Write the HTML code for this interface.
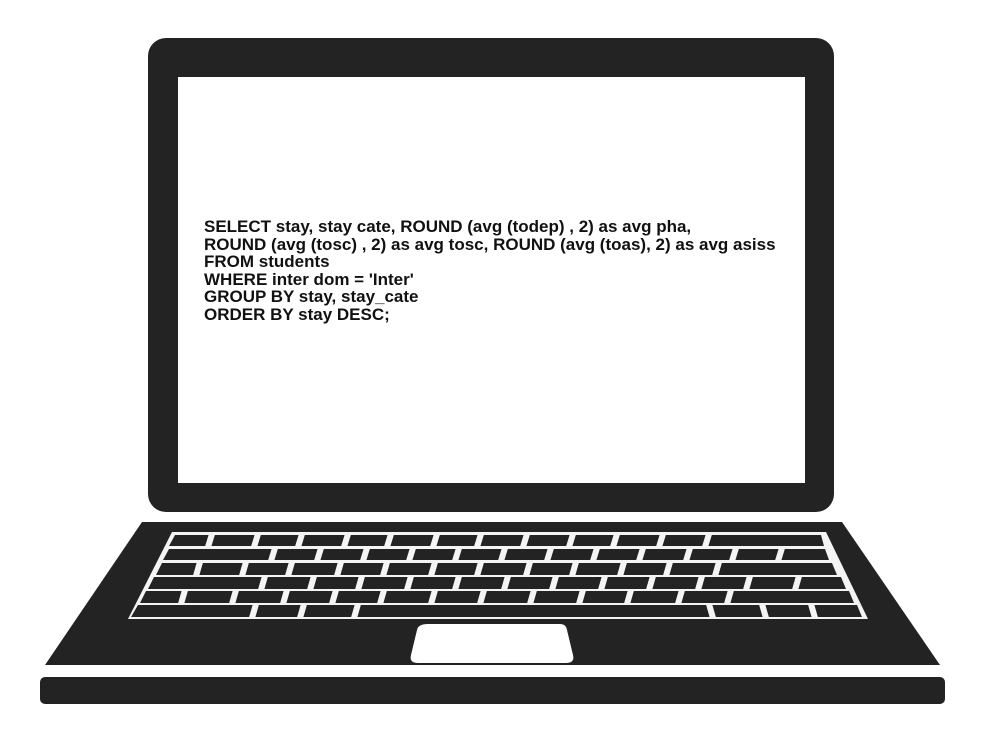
<!DOCTYPE html>
<html><head><meta charset="utf-8"><style>
html,body{margin:0;padding:0;background:#fff;width:1004px;height:752px;overflow:hidden}
svg{position:absolute;left:0;top:0}
.code{position:absolute;left:204px;top:218px;font:bold 17px/17.5px "Liberation Sans",Arial,sans-serif;color:#111;letter-spacing:0;white-space:pre}
</style></head><body>
<svg width="1004" height="752" viewBox="0 0 1004 752">
<rect x="148" y="38" width="686" height="474" rx="18" fill="#232323"/>
<rect x="178" y="77" width="627" height="406" fill="#fff"/>
<polygon points="142,522 842,522 940,665 45,665" fill="#232323"/>
<rect x="40" y="677" width="905" height="27" rx="5" fill="#232323"/>
<polygon points="172,532 826,532 868,619 128,619" fill="#f4f4f4"/>
<g fill="#232323">
<polygon points="175,535 821,535 824,546 169,546"/>
<polygon points="169,549 825,549 829,560 163,560"/>
<polygon points="162,563 832,563 837,575 156,575"/>
<polygon points="154,577 841,577 846,589 148,589"/>
<polygon points="146,591 849,591 854,603 140,603"/>
<polygon points="138,605 857,605 862,617 131,617"/>
</g>
<g stroke="#f4f4f4" stroke-width="6">
<path d="M212 534l-4 13M258 534l-4 13M302 534l-4 13M348 534l-4 13M391 534l-4 13M437 534l-4 13M481 534l-4 13M527 534l-4 13M573 534l-4 13M617 534l-4 13M663 534l-4 13M709 534l-4 13"/>
<path d="M275 548l-4 13M321 548l-4 13M367 548l-4 13M413 548l-4 13M459 548l-4 13M505 548l-4 13M551 548l-4 13M597 548l-4 13M643 548l-4 13M690 548l-4 13M736 548l-4 13M782 548l-4 13"/>
<path d="M200 562l-4 14M246 562l-4 14M292 562l-4 14M341 562l-4 14M387 562l-4 14M435 562l-4 14M481 562l-4 14M530 562l-4 14M576 562l-4 14M624 562l-4 14M670 562l-4 14M719 562l-4 14"/>
<path d="M265 576l-4 14M314 576l-4 14M362 576l-4 14M411 576l-4 14M459 576l-4 14M508 576l-4 14M556 576l-4 14M605 576l-4 14M653 576l-4 14M702 576l-4 14M750 576l-4 14M799 576l-4 14"/>
<path d="M185 590l-4 14M236 590l-4 14M287 590l-4 14M336 590l-4 14M384 590l-4 14M435 590l-4 14M484 590l-4 14M534 590l-4 14M583 590l-4 14M631 590l-4 14M682 590l-4 14M731 590l-4 14"/>
<path d="M256 604l-4 14M304 604l-4 14M358 604l-4 14M709 604l4 14M762 604l4 14M811 604l4 14"/>
</g>
<path d="M428 624 L560 624 Q566 624 567 630 L573 655 Q575 663 566 663 L418 663 Q409 663 411 655 L417 630 Q418 624 428 624Z" fill="#fff"/>
</svg>
<div class="code">SELECT stay, stay cate, ROUND (avg (todep) , 2) as avg pha,
ROUND (avg (tosc) , 2) as avg tosc, ROUND (avg (toas), 2) as avg asiss
FROM students
WHERE inter dom = 'Inter'
GROUP BY stay, stay_cate
ORDER BY stay DESC;</div>
</body></html>
